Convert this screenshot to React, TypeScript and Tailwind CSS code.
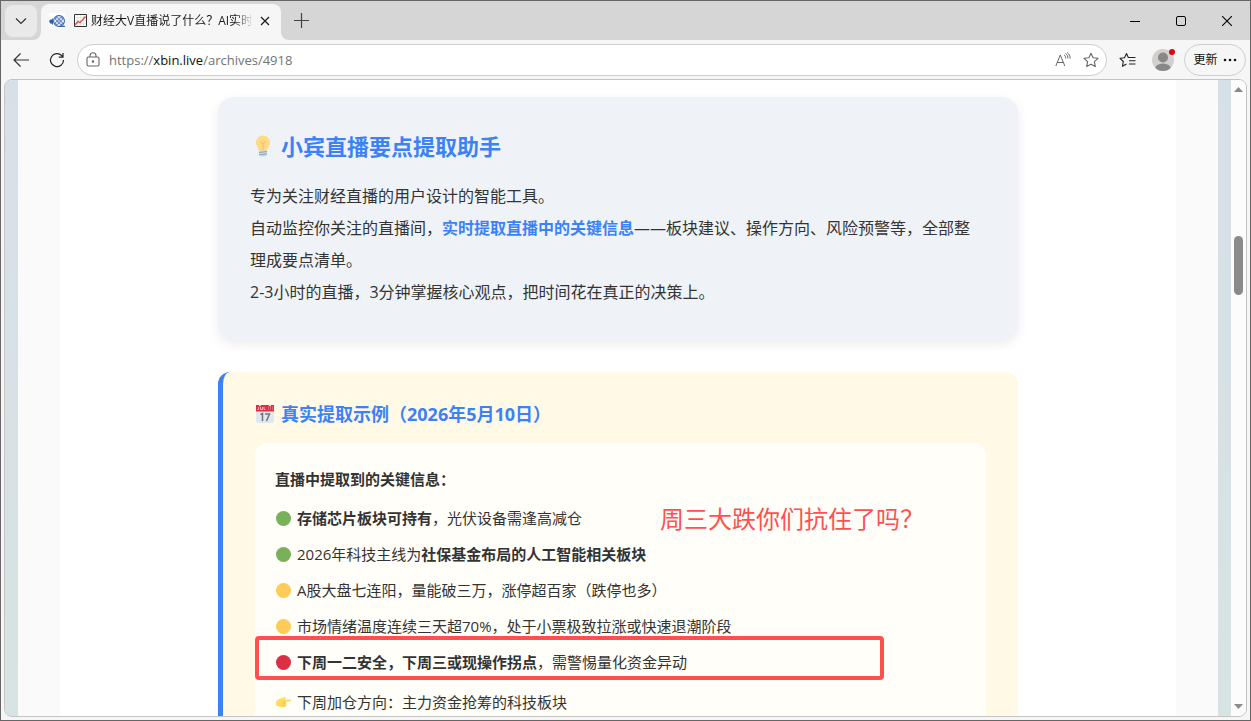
import type { ReactNode } from "react";

function Bulb() {
  return (
    <svg viewBox="0 0 22 22" className="size-[22px]" aria-hidden="true">
      <path d="M11 .5a7 7 0 0 0-7 7c0 3.200 2.200 5 3 8h8c.8-3 3-4.800 3-8a7 7 0 0 0-7-7z" fill="#ffd983" />
      <path d="M8.500 6.500l2.500 3 2.500-3M11 9.500V15" fill="none" stroke="#ffb84a" strokeWidth="1" />
      <path d="M7 15.500h8v4.500l-2 1.500H9L7 20z" fill="#ccd6dd" />
      <path d="M7 17.500l8-1M7 19.800l8-1" stroke="#8fa5b3" strokeWidth="1" />
    </svg>
  );
}

function Calendar() {
  return (
    <svg viewBox="0 0 18 18" className="size-[18px]" aria-hidden="true">
      <path d="M0 5h18v11a2 2 0 0 1-2 2H2a2 2 0 0 1-2-2z" fill="#e1e8ed" />
      <path d="M0 0h18v6.500H0z" fill="#dd2e44" />
      <path d="M2.500 2v2.500H1.500M4.500 2v2.500h2V2M8 2v2.500h1.500" fill="none" stroke="#f5d5da" strokeWidth=".8" />
      <path d="M12 2h1M14 2h1M16 2h1M12 4h1M14 4h1M16 4h1" stroke="#f4abb8" strokeWidth=".8" />
      <circle cx="4" cy=".6" r=".8" fill="#fff" />
      <circle cx="14" cy=".6" r=".8" fill="#fff" />
      <path d="M4.500 9.500L6.500 8.500V16M9 9h4.500L10.500 16" fill="none" stroke="#66757f" strokeWidth="1.500" />
    </svg>
  );
}

function Dot({ tone }: { tone: "green" | "yellow" | "red" }) {
  const tones = { green: "bg-[#78b159]", yellow: "bg-[#fdcb58]", red: "bg-[#dd2e44]" };
  return <span className={`size-[15px] shrink-0 rounded-full ${tones[tone]}`} />;
}

function Hand() {
  return (
    <svg viewBox="0 0 15 15" className="size-[15px] shrink-0" aria-hidden="true">
      <path
        d="M0 6.500C1.500 4.500 3.500 3.800 5.500 3.300L8.700 2c1.100-.3 1.600.8.800 1.400L8.300 4.600H14c1.300 0 1.300 2 0 2l-4.300.2c.9.400.9 1.400.2 1.800.8.500.6 1.500-.2 1.800.4.700 0 1.500-.9 1.600-2 .5-4.600.2-6-.8L0 10.700z"
        fill="#ffdc5d"
      />
      <path d="M9.700 6.800H7M9.500 8.600H7M9.300 10.400H7" stroke="#ef9645" strokeWidth=".4" />
    </svg>
  );
}

function Favicon() {
  return (
    <svg viewBox="0 0 16 16" className="size-4 shrink-0 bg-white" aria-hidden="true">
      <circle cx="10" cy="8" r="5.400" fill="#fff" stroke="#2e5db0" strokeWidth="1.100" />
      <circle cx="10" cy="8" r=".7" fill="#2e5db0" />
      <g fill="none" stroke="#2e5db0" strokeWidth=".8">
        <circle cx="8" cy="6" r="1.500" />
        <circle cx="12" cy="6" r="1.500" />
        <circle cx="8" cy="10" r="1.500" />
        <circle cx="12" cy="10" r="1.500" />
      </g>
      <path d="M11 13.300h5" stroke="#2e5db0" strokeWidth="1.200" />
      <path d="M0 8l1.500-1.500H3L4 5v7l-1.500-1.500H1.200z" fill="#2e5db0" />
    </svg>
  );
}

function ChartEmoji() {
  return (
    <svg viewBox="0 0 13 13" className="size-[13px] shrink-0" aria-hidden="true">
      <path d="M.5.500h12v12H.500z" fill="#fff" stroke="#333" />
      <path d="M3.500 1v11M6.500 1v11M9.500 1v11M1 3.500h11M1 6.500h11M1 9.500h11" stroke="#ddd" strokeWidth=".6" />
      <path d="M1 11l3-3.500 2 1.200 5.500-6.200" fill="none" stroke="#e0503a" strokeWidth="1.400" />
    </svg>
  );
}

function TabBar() {
  return (
    <header className="flex h-[39px] shrink-0 items-end bg-[#d6d6d6]">
      <div className="flex h-full w-10 shrink-0 items-center justify-center px-1">
        <button aria-label="标签页操作" className="flex size-8 items-center justify-center rounded-lg bg-[#e9e9e9]">
          <svg viewBox="0 0 12 8" className="h-2 w-3" fill="none" stroke="#333" strokeWidth="1.200">
            <path d="M1 1.500l5 5 5-5" />
          </svg>
        </button>
      </div>
      <div className="relative flex h-9 w-60 shrink-0 items-center rounded-t-lg bg-[#f6f6f6] px-2 pb-[3px]">
        <svg viewBox="0 0 8 8" className="absolute -left-2 bottom-0 size-2" aria-hidden="true">
          <path d="M8 0v8H0a8 8 0 0 0 8-8z" fill="#f6f6f6" />
        </svg>
        <svg viewBox="0 0 8 8" className="absolute -right-2 bottom-0 size-2" aria-hidden="true">
          <path d="M0 0v8h8a8 8 0 0 1-8-8z" fill="#f6f6f6" />
        </svg>
        <Favicon />
        <div className="ml-[9px] flex min-w-0 flex-1 items-center gap-1 overflow-hidden mask-r-from-90% mask-r-to-100%">
          <ChartEmoji />
          <span className="whitespace-nowrap text-xs text-[#1b1b1b]">财经大V直播说了什么？AI实时提</span>
        </div>
        <button aria-label="关闭标签页" className="ml-1 flex size-4 items-center justify-center">
          <svg viewBox="0 0 10 10" className="size-[10px]" stroke="#1b1b1b" strokeWidth="1.200">
            <path d="M1 1l8 8M9 1l-8 8" />
          </svg>
        </button>
      </div>
      <button aria-label="新建标签页" className="ml-2 flex h-[39px] w-6 items-center justify-center">
        <svg viewBox="0 0 15 15" className="size-[15px]" stroke="#444" strokeWidth="1.200">
          <path d="M7.500 0v15M0 7.500h15" />
        </svg>
      </button>
      <div className="ml-auto flex h-full">
        <button aria-label="最小化" className="flex w-[46px] items-center justify-center">
          <svg viewBox="0 0 10 10" className="size-[10px]" stroke="#000"><path d="M0 5.500h10" /></svg>
        </button>
        <button aria-label="最大化" className="flex w-[46px] items-center justify-center">
          <svg viewBox="0 0 10 10" className="size-[10px]" fill="none" stroke="#000"><rect x=".5" y=".5" width="9" height="9" rx="1.500" /></svg>
        </button>
        <button aria-label="关闭" className="flex w-[46px] items-center justify-center">
          <svg viewBox="0 0 10 10" className="size-[10px]" stroke="#000" strokeWidth="1.100"><path d="M0 0l10 10M10 0L0 10" /></svg>
        </button>
      </div>
    </header>
  );
}

const STAR = "M8 1.200l2.100 4.500 4.900.6-3.600 3.400.9 4.900L8 12.200l-4.300 2.400.9-4.900L1 6.300l4.900-.6z";

function Toolbar() {
  return (
    <div className="flex h-[39px] shrink-0 items-center bg-[#f6f6f6] pl-3 pr-1">
      <button aria-label="返回" className="flex w-4 justify-center">
        <svg viewBox="0 0 16 14" className="h-[14px] w-4" fill="none" stroke="#333" strokeWidth="1.200">
          <path d="M16 7H1M7.500.5L1 7l6.500 6.500" />
        </svg>
      </button>
      <button aria-label="刷新" className="ml-5 flex w-4 justify-center">
        <svg viewBox="0 0 16 16" className="size-4" fill="none" stroke="#222" strokeWidth="1.200">
          <path d="M14.500 8A6.500 6.500 0 1 1 12.800 3.700L14 5M14 1v4.200H9.800" />
        </svg>
      </button>
      <div className="ml-3 flex h-8 min-w-0 flex-1 items-center rounded-full border border-[#cfcfcf] bg-white pl-2 pr-[7px]">
        <svg viewBox="0 0 14 16" className="h-4 w-[14px] shrink-0" fill="none" stroke="#666" strokeWidth="1.100" aria-hidden="true">
          <rect x="1" y="5" width="12" height="9" rx="1.500" />
          <path d="M4 5V3.800a3 3 0 0 1 6 0V5" />
          <circle cx="7" cy="9.500" r=".7" fill="#666" />
        </svg>
        <a href="https://xbin.live/archives/4918" className="ml-[9px] pt-0.5 text-[13px] text-[#737373]">
          https://<span className="text-[#111]">xbin.live</span>/archives/4918
        </a>
        <button aria-label="朗读此页内容" className="ml-auto">
          <svg viewBox="0 0 16 16" className="size-4" fill="none" stroke="#666" strokeWidth="1">
            <path d="M.8 14L5.300 3 9.800 14M2.300 10.500h6M9 3c1.300.8 1.700 2 1.700 3.500M10.500 1.500c1.800 1.200 2.400 2.800 2.400 5M12.200.5c2.100 1.500 2.900 3.500 2.900 6" />
          </svg>
        </button>
        <button aria-label="收藏此页" className="ml-3">
          <svg viewBox="0 0 16 16" className="size-4" fill="none" stroke="#666" strokeWidth="1.100" strokeLinejoin="round"><path d={STAR} /></svg>
        </button>
      </div>
      <button aria-label="收藏夹" className="ml-3">
        <svg viewBox="0 0 17 16" className="h-4 w-[17px]" fill="none" stroke="#222" strokeWidth="1.100" strokeLinejoin="round">
          <path d="M10 5.500H9.300L7.500 1.500l-2 4.200-4.500.6 3.300 3.200-.8 4.700 4-2.200M10 5.500h6.500M10 8.800h6.500M10 12h6.500" />
        </svg>
      </button>
      <button aria-label="个人资料" className="relative ml-4">
        <svg viewBox="0 0 22 22" className="size-[22px]">
          <clipPath id="face"><circle cx="11" cy="11" r="11" /></clipPath>
          <g clipPath="url(#face)">
            <path d="M0 0h22v22H0z" fill="#d2d0ce" />
            <circle cx="11" cy="8.500" r="5" fill="#8a8886" />
            <ellipse cx="11" cy="20" rx="8" ry="5.500" fill="#8a8886" />
          </g>
        </svg>
        <span className="absolute -right-px top-0 size-[6px] rounded-full bg-[#e8000b]" />
      </button>
      <button className="ml-[10px] flex h-8 w-[62px] items-center justify-center gap-[5px] rounded-full border border-[#cfcfcf] text-xs text-[#111]">
        更新
        <svg viewBox="0 0 14 4" className="h-1 w-[14px]" fill="#111" aria-hidden="true">
          <circle cx="2" cy="2" r="1.300" /><circle cx="7" cy="2" r="1.300" /><circle cx="12" cy="2" r="1.300" />
        </svg>
      </button>
    </div>
  );
}

function Scrollbar() {
  return (
    <div className="flex w-[15px] shrink-0 flex-col items-center bg-[#fcfcfc] py-[7px]" aria-hidden="true">
      <svg viewBox="0 0 9 5" className="h-[5px] w-[9px]" fill="#8a8a8a"><path d="M4.500 0L9 5H0z" /></svg>
      <div className="flex w-full flex-1 flex-col items-center pt-36">
        <div className="h-[59px] w-[9px] rounded-full bg-[#8a8a8a]" />
      </div>
      <svg viewBox="0 0 9 5" className="h-[5px] w-[9px]" fill="#8a8a8a"><path d="M0 0h9L4.500 5z" /></svg>
    </div>
  );
}

function Item({ icon, children }: { icon: ReactNode; children: ReactNode }) {
  return (
    <li className="flex h-9 items-center gap-[6px] pl-px">
      {icon}
      <span className="whitespace-nowrap">{children}</span>
    </li>
  );
}

function Article() {
  return (
    <main className="min-w-0 flex-1 bg-white">
      <div className="mx-auto w-full max-w-[800px] pt-[17px]">
        <section className="rounded-2xl bg-[#eff3f8] px-8 pb-8 pt-[33px] shadow-[0_4px_12px_rgba(0,0,0,0.08)]">
          <h2 className="flex h-8 items-center gap-[7px] pl-[2px] text-[22px] font-bold text-[#3b82f6]">
            <Bulb />
            小宾直播要点提取助手
          </h2>
          <p className="mt-[18px] text-base leading-8">
            专为关注财经直播的用户设计的智能工具。
            <br />
            自动监控你关注的直播间，<strong className="text-[#3b82f6]">实时提取直播中的关键信息</strong>——板块建议、操作方向、风险预警等，全部整理成要点清单。
            <br />
            2-3小时的直播，3分钟掌握核心观点，把时间花在真正的决策上。
          </p>
        </section>
        <section className="mt-8 rounded-xl border-l-[5px] border-[#3b82f6] bg-[#fff9e6] px-8 pb-8 pt-[27px]">
          <h3 className="flex h-[30px] items-center gap-[7px] pl-px text-lg font-bold text-[#3b82f6]">
            <Calendar />
            真实提取示例（2026年5月10日）
          </h3>
          <div className="relative mt-[14px] rounded-xl bg-[#fffef9] px-5 py-[18px] text-[15px]">
            <p className="h-9 font-bold leading-9">直播中提取到的关键信息：</p>
            <ul className="mt-[3px]">
              <Item icon={<Dot tone="green" />}><strong>存储芯片板块可持有</strong>，光伏设备需逢高减仓</Item>
              <Item icon={<Dot tone="green" />}>2026年科技主线为<strong>社保基金布局的人工智能相关板块</strong></Item>
              <Item icon={<Dot tone="yellow" />}>A股大盘七连阳，量能破三万，涨停超百家（跌停也多）</Item>
              <Item icon={<Dot tone="yellow" />}>市场情绪温度连续三天超70%，处于小票极致拉涨或快速退潮阶段</Item>
              <Item icon={<Dot tone="red" />}><strong>下周一二安全，下周三或现操作拐点</strong>，需警惕量化资金异动</Item>
            </ul>
            <ul className="mt-1">
              <Item icon={<Hand />}>下周加仓方向：主力资金抢筹的科技板块</Item>
            </ul>
            <p className="absolute left-[405px] top-[58px] whitespace-nowrap text-2xl leading-9 text-[#ff5050]">周三大跌你们抗住了吗？</p>
            <div className="absolute left-0 top-[193px] h-11 w-[629px] rounded-sm border-4 border-[#ff5050]" />
          </div>
        </section>
      </div>
    </main>
  );
}

export default function App() {
  return (
    <div
      lang="zh-CN"
      className="flex h-screen flex-col overflow-hidden border border-[#666] bg-[#f6f6f6] font-['Open_Sans','Noto_Sans_CJK_SC',sans-serif] text-[#333]"
    >
      <TabBar />
      <Toolbar />
      <div className="mx-[3px] mb-[3px] flex min-h-0 flex-1 overflow-hidden rounded-lg border border-[#c4c4c4]">
        <div className="flex min-w-0 flex-1 overflow-hidden bg-linear-to-b from-[#d6e0e7] to-[#d8e3e3] px-[13px]">
          <div className="flex min-w-0 flex-1 bg-[#fafafa] px-[42px]">
            <Article />
          </div>
        </div>
        <Scrollbar />
      </div>
    </div>
  );
}
